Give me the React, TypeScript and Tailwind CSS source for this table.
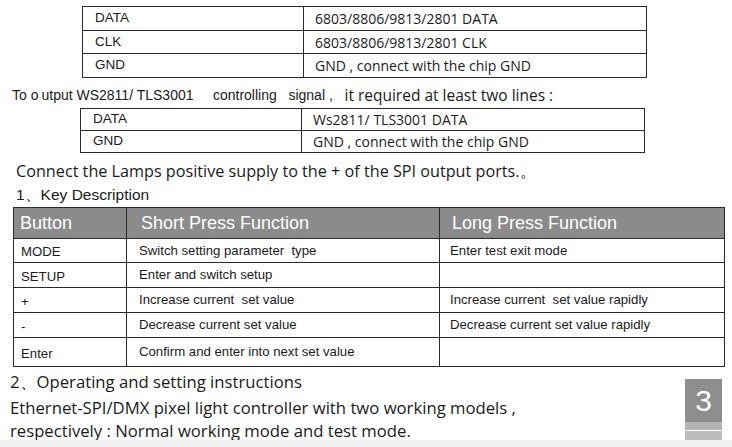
import React from 'react';

const sans = "font-['Liberation_Sans',Arial,sans-serif]";
const open = "font-['Open_Sans','Noto_Sans',sans-serif]";

type Row = [string, string];

const spiRows: Row[] = [
  ['DATA', '6803/8806/9813/2801 DATA'],
  ['CLK', '6803/8806/9813/2801 CLK'],
  ['GND', 'GND , connect with the chip GND'],
];

const wsRows: Row[] = [
  ['DATA', 'Ws2811/ TLS3001 DATA'],
  ['GND', 'GND , connect with the chip GND'],
];

const keyRows = [
  { key: 'MODE', short: 'Switch setting parameter  type', long: 'Enter test exit mode', h: 'h-[24px]' },
  { key: 'SETUP', short: 'Enter and switch setup', long: '', h: 'h-[25px]' },
  { key: '+', short: 'Increase current  set value', long: 'Increase current  set value rapidly', h: 'h-[25px]' },
  { key: '-', short: 'Decrease current set value', long: 'Decrease current set value rapidly', h: 'h-[25px]' },
  { key: 'Enter', short: 'Confirm and enter into next set value', long: '', h: 'h-[29px]' },
];

function PinTable({ rows, heights, wrap, split }: { rows: Row[]; heights: string[]; wrap: string; split: string }) {
  return (
    <div className={`${wrap} border-[1.5px] border-[#2a2a2a] flex flex-col`}>
      {rows.map(([a, b], i) => (
        <div key={a} className={`flex ${heights[i]} ${i > 0 ? 'border-t-[1.5px] border-[#2a2a2a]' : ''}`}>
          <div className={`${split} shrink-0 border-r-[1.5px] border-[#2a2a2a] pl-[12px] flex items-center text-[13.5px] text-[#1a1a1a] ${sans}`}>
            {a}
          </div>
          <div className={`flex-1 pl-[11px] flex items-center text-[14px] text-[#1a1a1a] ${open}`}>{b}</div>
        </div>
      ))}
    </div>
  );
}

export default function App() {
  return (
    <div className="w-[732px] h-[447px] bg-white overflow-hidden flex flex-col relative">
      <div className="pt-[6px]">
        <PinTable rows={spiRows} heights={['h-[23px]', 'h-[23px]', 'h-[24px]']} wrap="ml-[82px] w-[565px]" split="w-[221px]" />
      </div>

      <div className="mt-[6px] h-[22px] pl-[12px] flex items-end whitespace-pre text-[#1a1a1a]">
        <span className={`text-[14px] ${sans}`}>
          {'To o'}
          <span className="ml-[3px]">{'utput WS2811/ TLS3001     controlling   signal ,   '}</span>
        </span>
        <span className={`text-[15.5px] leading-[22px] ${open}`}>it required at least two lines :</span>
      </div>

      <div className="mt-[2px]">
        <PinTable rows={wsRows} heights={['h-[21px]', 'h-[22px]']} wrap="ml-[80px] w-[565px]" split="w-[221px]" />
      </div>

      <div className={`mt-[6px] h-[24px] pl-[16px] flex items-center text-[16.2px] text-[#1a1a1a] ${open}`}>
        Connect the Lamps positive supply to the + of the SPI output ports.。
      </div>
      <div className={`h-[24px] pl-[16px] flex items-center text-[15.5px] text-[#1a1a1a] ${sans}`}>
        1、Key Description
      </div>

      <div className={`ml-[13px] w-[712px] border-[1.5px] border-[#2a2a2a] flex flex-col ${sans}`}>
        <div className="flex h-[30px] bg-[#8b8b8b] text-white text-[18px]">
          <div className="w-[113px] shrink-0 border-r-[1.5px] border-[#2a2a2a] pl-[6px] flex items-center">Button</div>
          <div className="w-[313px] shrink-0 border-r-[1.5px] border-[#2a2a2a] pl-[14px] flex items-center">Short Press Function</div>
          <div className="flex-1 pl-[12px] flex items-center">Long Press Function</div>
        </div>
        {keyRows.map((r) => (
          <div key={r.key} className={`flex ${r.h} border-t-[1.5px] border-[#2a2a2a] text-[13.2px] text-[#1a1a1a]`}>
            <div className="w-[113px] shrink-0 border-r-[1.5px] border-[#2a2a2a] pl-[7px] flex items-center pt-[3px]">{r.key}</div>
            <div className="w-[313px] shrink-0 border-r-[1.5px] border-[#2a2a2a] pl-[12px] flex items-center whitespace-pre">{r.short}</div>
            <div className="flex-1 pl-[10px] flex items-center whitespace-pre">{r.long}</div>
          </div>
        ))}
      </div>

      <div className="flex mt-[3px]">
        <div className={`flex-1 pl-[10px] text-[16.7px] leading-[24px] text-[#1a1a1a] ${open}`}>
          <div>2、Operating and setting instructions</div>
          <div className="mt-[2px]">Ethernet-SPI/DMX pixel light controller with two working models ,</div>
          <div className="-mt-[1px]">respectively : Normal working mode and test mode.</div>
        </div>
        <div className="w-[37px] mr-[10px] mt-[9px] flex flex-col">
          <div className={`h-[43px] bg-[#8e8e8e] text-white text-[30px] leading-none flex items-center justify-center ${sans}`}>
            3
          </div>
          <div className="h-[8px] bg-[#b4b4b4]" />
          <div className="h-[1px] bg-white" />
          <div className="h-[12px] bg-[#bdbdbd]" />
        </div>
      </div>

      <div className="absolute left-0 right-0 bottom-0 h-[7px] bg-[#f1f1f1]" />
    </div>
  );
}
